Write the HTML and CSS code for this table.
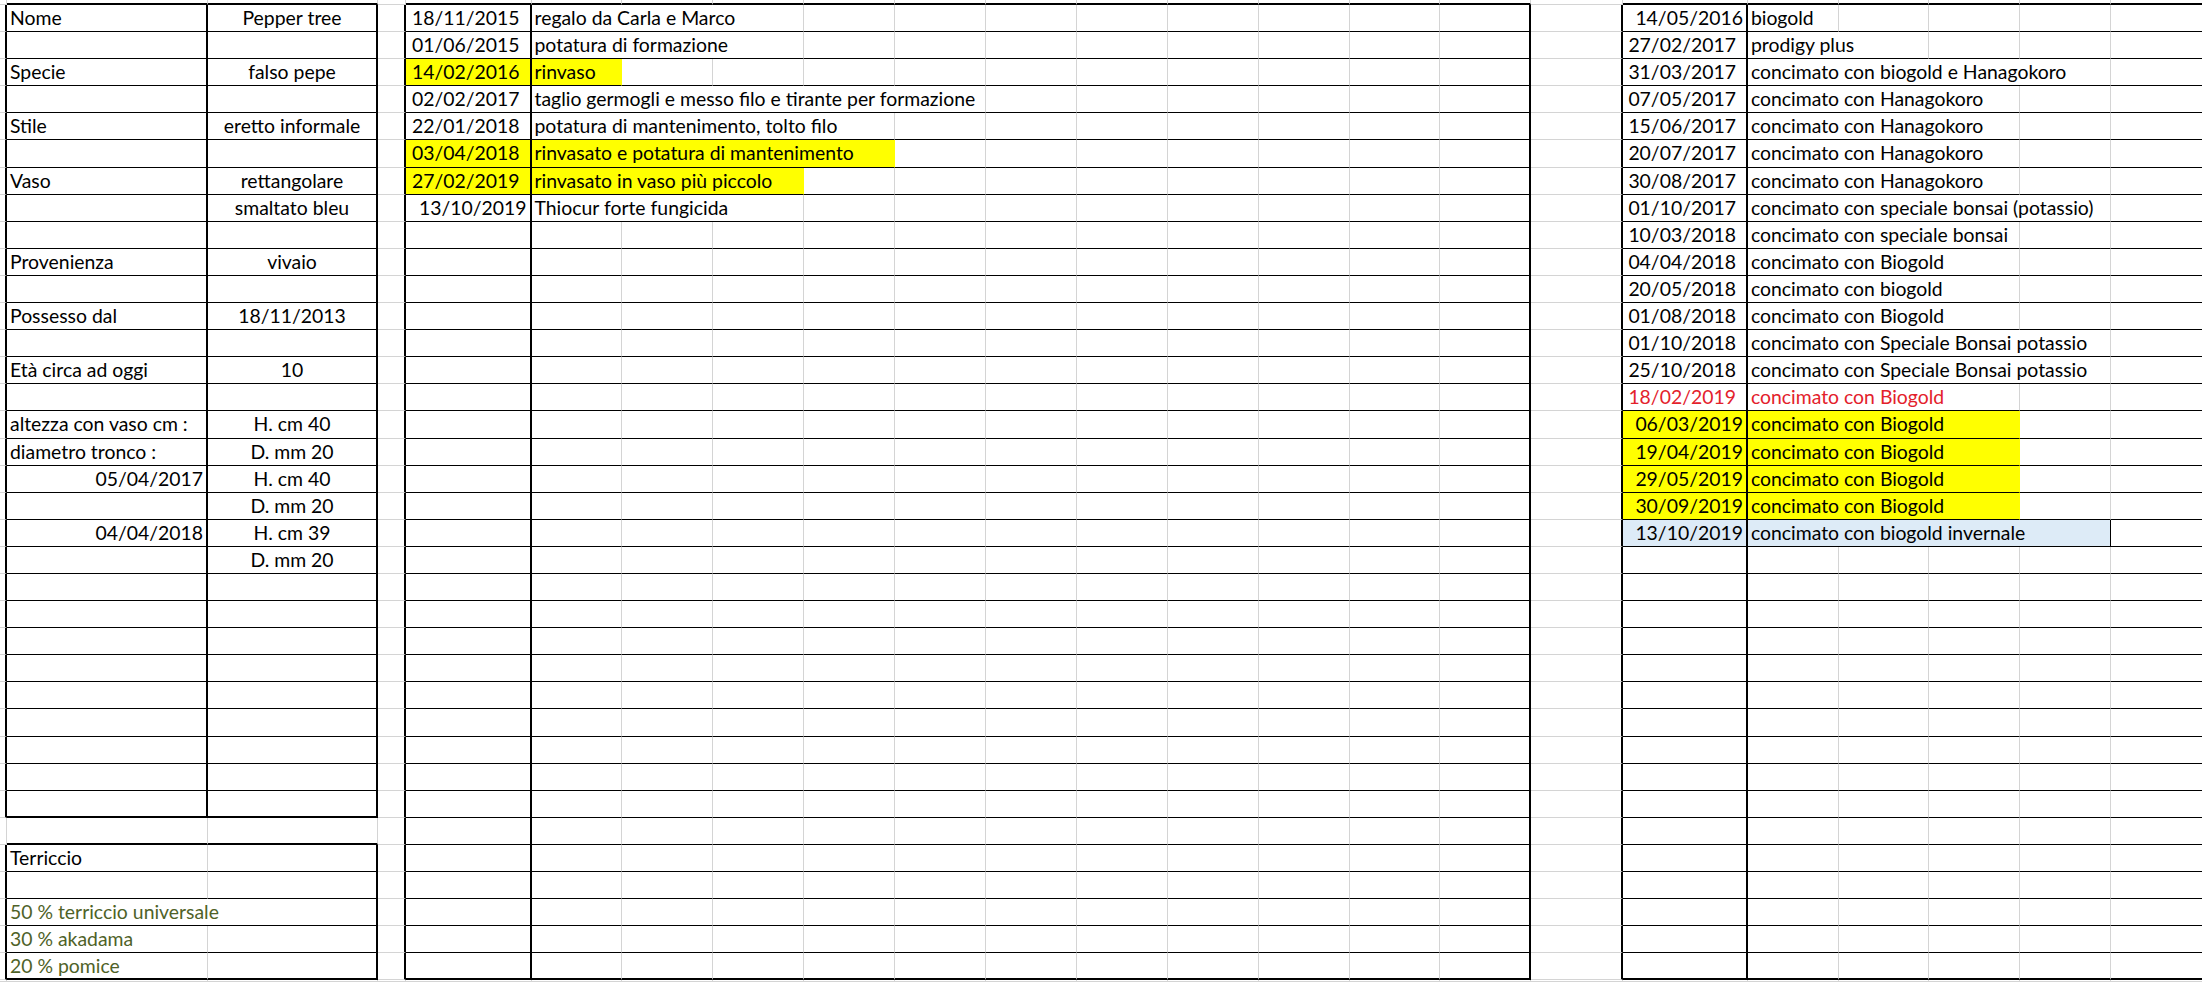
FILE: index.html
```html
<!DOCTYPE html>
<html lang="it">
<head>
    <meta charset="UTF-8">
    <meta name="viewport" content="width=device-width, initial-scale=1.0">
    <title>Bonsai - Pepper tree</title>
    <link rel="stylesheet" href="styles.css">
</head>
<body>
    <div id="sheet" class="sheet"></div>

    <script>
        // colonne: bordo, A, B, C, D, E..O, P, Q, R..V
        const COLS = 23;
        const ROWS = 36;
        const DIVIDERS = { left: 1, mid: 4, right: 17 };

        const rows = [];
        for (let r = 0; r < ROWS; r++) rows.push({});

        function put(r, c, text, cls, span) {
            rows[r][c] = { text: text, cls: cls || '', span: span || 1 };
        }

        // scheda della pianta
        const scheda = [
            [0, 'Nome', 'Pepper tree'],
            [2, 'Specie', 'falso pepe'],
            [4, 'Stile', 'eretto informale'],
            [6, 'Vaso', 'rettangolare'],
            [7, '', 'smaltato bleu'],
            [9, 'Provenienza', 'vivaio'],
            [11, 'Possesso dal', '18/11/2013'],
            [13, 'Età circa ad oggi', '10'],
            [15, 'altezza con vaso cm :', 'H. cm 40'],
            [16, 'diametro tronco :', 'D. mm 20'],
            [17, '05/04/2017', 'H. cm 40'],
            [18, '', 'D. mm 20'],
            [19, '04/04/2018', 'H. cm 39'],
            [20, '', 'D. mm 20']
        ];
        scheda.forEach(function (row) {
            const isDate = /\d\/\d/.test(row[1]);
            put(row[0], 1, row[1], isDate ? 'num tight' : 'txt');
            put(row[0], 2, row[2], 'ctr');
        });

        // terriccio
        put(31, 1, 'Terriccio', 'txt');
        put(33, 1, '50 % terriccio universale', 'txt olive', 2);
        put(34, 1, '30 % akadama', 'txt olive');
        put(35, 1, '20 % pomice', 'txt olive');

        // lavori: data, descrizione, celle occupate, colore, data stretta
        const lavori = [
            ['18/11/2015', 'regalo da Carla e Marco', 3],
            ['01/06/2015', 'potatura di formazione', 3],
            ['14/02/2016', 'rinvaso', 1, 'yl'],
            ['02/02/2017', 'taglio germogli e messo filo e tirante per formazione', 5],
            ['22/01/2018', 'potatura di mantenimento, tolto filo', 4],
            ['03/04/2018', 'rinvasato e potatura di mantenimento', 4, 'yl'],
            ['27/02/2019', 'rinvasato in vaso più piccolo', 3, 'yl'],
            ['13/10/2019', 'Thiocur forte fungicida', 3, '', true]
        ];
        lavori.forEach(function (row, r) {
            const fill = row[3] || '';
            put(r, 4, row[0], 'num ' + fill + (row[4] ? ' tight' : ''));
            put(r, 5, row[1], 'txt ' + fill, row[2]);
        });

        // concimazioni
        const concimi = [
            ['14/05/2016', 'biogold', 1, '', true],
            ['27/02/2017', 'prodigy plus', 2],
            ['31/03/2017', 'concimato con biogold e Hanagokoro', 4],
            ['07/05/2017', 'concimato con Hanagokoro', 3],
            ['15/06/2017', 'concimato con Hanagokoro', 3],
            ['20/07/2017', 'concimato con Hanagokoro', 3],
            ['30/08/2017', 'concimato con Hanagokoro', 3],
            ['01/10/2017', 'concimato con speciale bonsai (potassio)', 4],
            ['10/03/2018', 'concimato con speciale bonsai', 3],
            ['04/04/2018', 'concimato con Biogold', 3],
            ['20/05/2018', 'concimato con biogold', 3],
            ['01/08/2018', 'concimato con Biogold', 3],
            ['01/10/2018', 'concimato con Speciale Bonsai potassio', 4],
            ['25/10/2018', 'concimato con Speciale Bonsai potassio', 4],
            ['18/02/2019', 'concimato con Biogold', 3, 'red'],
            ['06/03/2019', 'concimato con Biogold', 3, 'yl', true],
            ['19/04/2019', 'concimato con Biogold', 3, 'yl', true],
            ['29/05/2019', 'concimato con Biogold', 3, 'yl', true],
            ['30/09/2019', 'concimato con Biogold', 3, 'yl', true],
            ['13/10/2019', 'concimato con biogold invernale', 4, 'bl', true]
        ];
        concimi.forEach(function (row, r) {
            const fill = row[3] || '';
            put(r, 17, row[0], 'num ' + fill + (row[4] ? ' tight' : ''));
            put(r, 18, row[1], 'txt ' + fill + (fill === 'bl' ? ' br' : ''), row[2]);
        });

        function region(r, c) {
            if (r < 0 || r >= ROWS) return null;
            if (c >= 1 && c <= 2 && r <= 29) return 'left';
            if (c >= 1 && c <= 2 && r >= 31) return 'soil';
            if (c >= 4 && c <= 15) return 'mid';
            if (c >= 17) return 'right';
            return null;
        }

        function bottomClass(r, c) {
            const reg = region(r, c);
            if (reg) return region(r + 1, c) === reg ? 'bb' : 'bb2';
            return region(r + 1, c) ? 'bb2' : '';
        }

        function rightClass(r, e) {
            if (e === COLS - 1) return 'nr';
            const reg = region(r, e);
            const next = region(r, e + 1);
            if (reg !== next) return (reg || next) ? 'br2' : '';
            if (reg && DIVIDERS[reg] === e) return 'br2';
            return '';
        }

        const sheet = document.getElementById('sheet');
        for (let r = -1; r <= ROWS; r++) {
            let c = 0;
            while (c < COLS) {
                const item = (r >= 0 && r < ROWS) ? rows[r][c] : null;
                const span = item ? item.span : 1;
                const cell = document.createElement('div');
                cell.className = ['cell', bottomClass(r, c), rightClass(r, c + span - 1), item ? item.cls : '']
                    .join(' ').replace(/\s+/g, ' ').trim();
                if (span > 1) cell.style.gridColumn = 'span ' + span;
                if (item) cell.textContent = item.text;
                sheet.appendChild(cell);
                c += span;
            }
        }
    </script>
</body>
</html>
```

FILE: styles.css
```css
body {
    margin: 0;
    padding: 0;
    background-color: #fff;
    font-family: "Lato", "Liberation Sans", sans-serif;
    font-size: 19.4px;
    color: #000;
}
.sheet {
    display: grid;
    grid-template-columns: 7px 201px 170px 28px 125.5px repeat(11, 90.9px) 91.3px 125.3px repeat(5, 90.8px);
    grid-template-rows: 5px repeat(36, 27.1px) 1fr;
    width: 2202px;
    height: 982px;
    overflow: hidden;
}
.cell {
    box-sizing: border-box;
    border-right: 1px solid #d4d4d4;
    border-bottom: 1px solid #d4d4d4;
    line-height: 26px;
    white-space: nowrap;
    overflow: hidden;
}
.bb {
    border-bottom-color: #000;
}
.bb2 {
    border-bottom: 2px solid #000;
}
.br2 {
    border-right: 2px solid #000;
}
.br {
    border-right-color: #000;
}
.nr {
    border-right: none;
}
.txt {
    padding-left: 3px;
}
.num {
    text-align: right;
    padding-right: 10px;
}
.num.tight {
    padding-right: 3px;
}
.ctr {
    text-align: center;
}
.yl {
    background-color: #ffff00;
}
.yl.txt {
    border-right-color: transparent;
}
.bl {
    background-color: #ddebf7;
}
.red {
    color: #e3212b;
}
.olive {
    color: #4f6228;
}
```
